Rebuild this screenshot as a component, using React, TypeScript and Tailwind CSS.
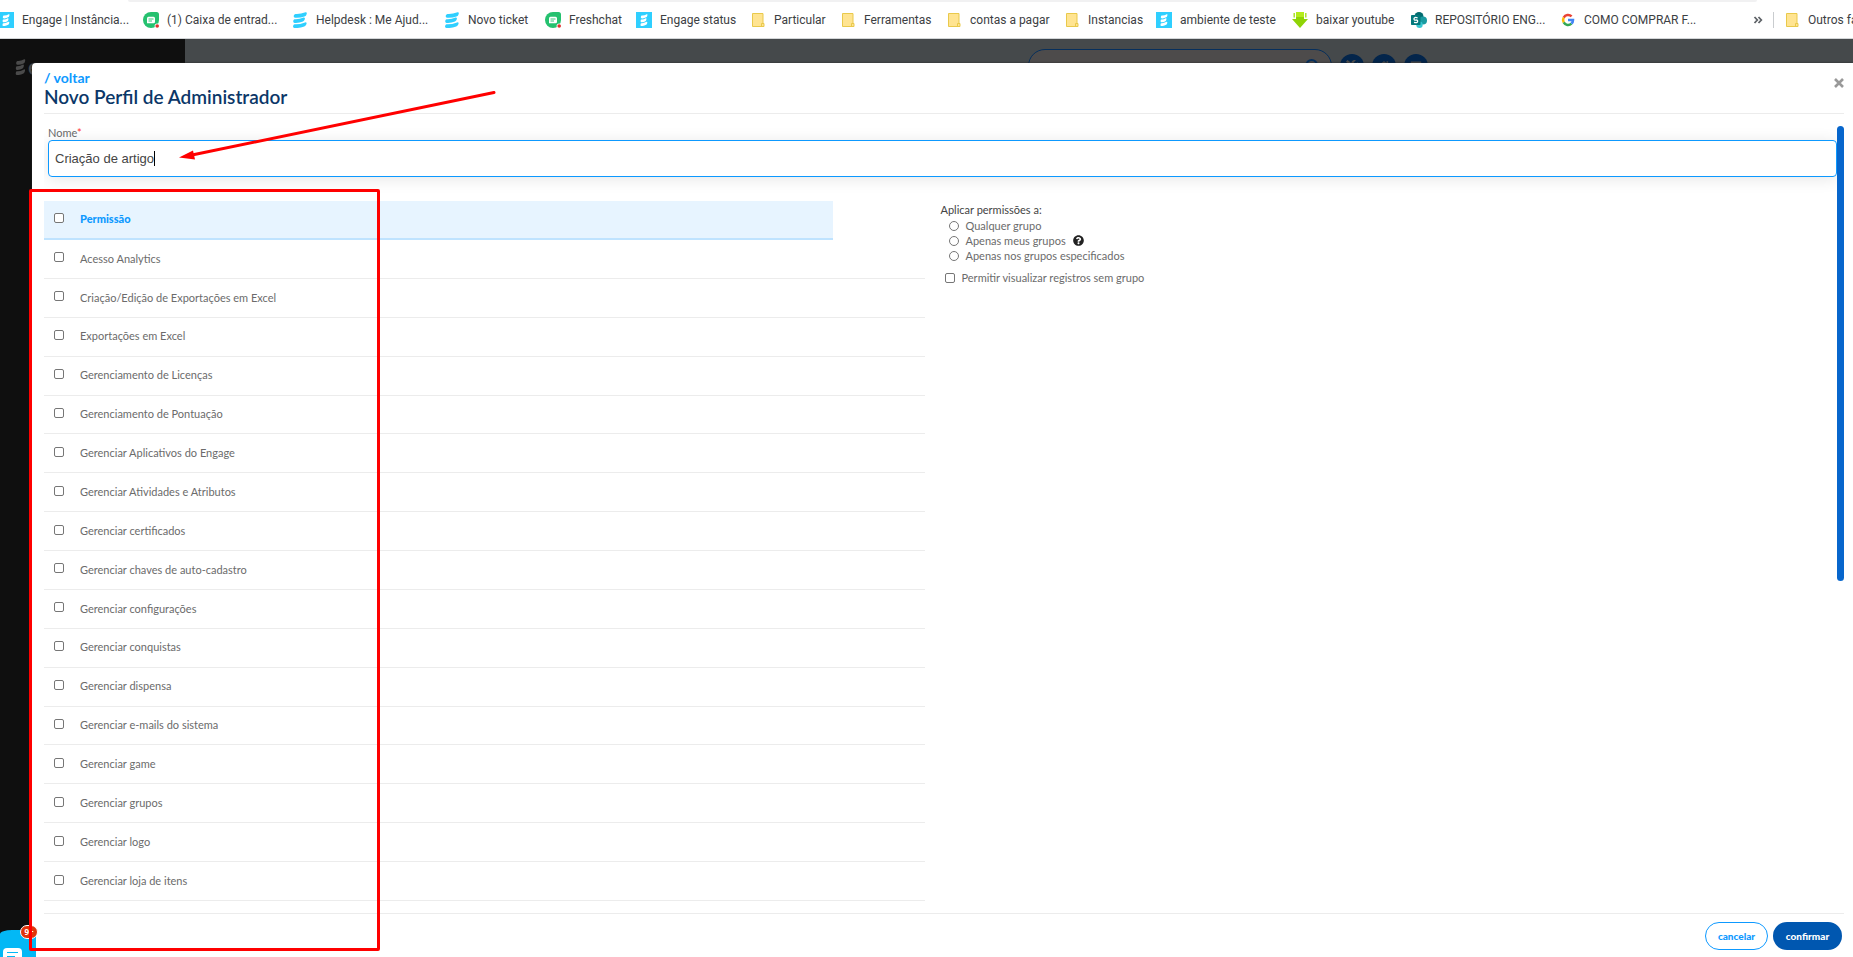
import { useState } from "react";
import { FaHome, FaQuestionCircle, FaTools, FaBars } from "react-icons/fa";
import { Search } from "lucide-react";

const bookmarks = [
  { label: "Engage | Instância...", icon: "engage", width: "w-[145px]" },
  { label: "(1) Caixa de entrad...", icon: "chat", width: "w-[149px]" },
  { label: "Helpdesk : Me Ajud...", icon: "stripes", width: "w-[152px]" },
  { label: "Novo ticket", icon: "stripes", width: "w-[101px]" },
  { label: "Freshchat", icon: "chat", width: "w-[91px]" },
  { label: "Engage status", icon: "engage", width: "w-[114px]" },
  { label: "Particular", icon: "folder", width: "w-[90px]" },
  { label: "Ferramentas", icon: "folder", width: "w-[106px]" },
  { label: "contas a pagar", icon: "folder", width: "w-[118px]" },
  { label: "Instancias", icon: "folder", width: "w-[92px]" },
  { label: "ambiente de teste", icon: "engage", width: "w-[136px]" },
  { label: "baixar youtube", icon: "download", width: "w-[119px]" },
  { label: "REPOSITÓRIO ENG...", icon: "sharepoint", width: "w-[149px]" },
  { label: "COMO COMPRAR F...", icon: "google", width: "w-[149px]" },
];

const permissions = [
  "Acesso Analytics",
  "Criação/Edição de Exportações em Excel",
  "Exportações em Excel",
  "Gerenciamento de Licenças",
  "Gerenciamento de Pontuação",
  "Gerenciar Aplicativos do Engage",
  "Gerenciar Atividades e Atributos",
  "Gerenciar certificados",
  "Gerenciar chaves de auto-cadastro",
  "Gerenciar configurações",
  "Gerenciar conquistas",
  "Gerenciar dispensa",
  "Gerenciar e-mails do sistema",
  "Gerenciar game",
  "Gerenciar grupos",
  "Gerenciar logo",
  "Gerenciar loja de itens",
];

const checkbox =
  "block size-[10px] shrink-0 appearance-none rounded-xs border border-[#767676] bg-white checked:bg-[#0d99ff]";
const radio =
  "block size-[10px] shrink-0 appearance-none rounded-full border border-[#767676] bg-white checked:bg-[#0d99ff]";

function Stripes({ className }: { className: string }) {
  return (
    <svg viewBox="0 0 16 16" preserveAspectRatio="none" className={className} fill="currentColor">
      <path d="M3.500 1.900Q8 2.300 13.500 .200Q15.200 -.100 14.700 1.900Q14.200 3.900 12.500 4.400Q8 6.200 3 5.800Q1.300 5.500 1.800 3.500Q2.300 1.900 3.500 1.900Z" />
      <path d="M2.500 7.200Q7 7.600 11.500 5.600Q13.300 5.200 12.900 7.100Q12.400 9 11 9.600Q7 11.200 2.500 10.900Q.900 10.600 1.200 8.900Q1.600 7.200 2.500 7.200Z" />
      <path d="M2.500 12.200Q7 12.600 13 10.400Q15 10 14.500 11.900Q13.900 13.800 12.300 14.400Q7 16.400 2.300 16Q.700 15.700 1.100 13.900Q1.500 12.200 2.500 12.200Z" />
    </svg>
  );
}

function BookmarkIcon({ icon }: { icon: string }) {
  if (icon === "engage") {
    return (
      <span className="flex size-4 shrink-0 items-center justify-center bg-[#2fcfff] text-white">
        <Stripes className="h-3 w-2" />
      </span>
    );
  }
  if (icon === "stripes") {
    return <Stripes className="size-4 shrink-0 text-[#2fcfff]" />;
  }
  if (icon === "chat") {
    return (
      <svg viewBox="0 0 16 16" className="size-4 shrink-0">
        <path d="M8 0h5.500Q16 0 16 2.500V8A8 8 0 1 1 8 0Z" fill="#25c16f" />
        <path d="M5.500 4.800h5Q12 4.800 12 6.300v3.400q0 1.500-1.500 1.500H4V6.300q0-1.500 1.500-1.500Z" fill="#fff" />
        <path d="M5.500 7h5M5.500 9h3.500" stroke="#25c16f" strokeWidth="0.900" />
        <circle cx="14.200" cy="14" r="2.600" fill="#fff" />
        <circle cx="14.200" cy="14" r="1.800" fill="#e0312e" />
      </svg>
    );
  }
  if (icon === "download") {
    return (
      <svg viewBox="0 0 16 16" className="size-4 shrink-0">
        <path d="M4 0h8v7h4l-8 9L0 7h4Z" fill="#8fd406" />
        <path d="M4 0h8v5H4Z" fill="#b4ec1c" />
        <path d="M2.200 1v4.500M13.800 1v4.500" stroke="#a5de1c" strokeWidth="1.400" />
      </svg>
    );
  }
  if (icon === "sharepoint") {
    return (
      <svg viewBox="0 0 16 16" className="size-4 shrink-0">
        <circle cx="8" cy="4.500" r="4.500" fill="#036c70" />
        <circle cx="12" cy="8.500" r="4" fill="#1a9ba1" />
        <circle cx="8.500" cy="12.700" r="3.200" fill="#37c6d0" />
        <rect x="0" y="3" width="9.500" height="10" rx="0.800" fill="#03787c" />
        <path d="M6.600 5.800Q3 4.800 3 6.700T4.900 8.100T6.600 9.700Q6.300 11.100 3 10.300" fill="none" stroke="#fff" strokeWidth="1.300" />
      </svg>
    );
  }
  if (icon === "google") {
    return (
      <svg viewBox="-4 -4 56 56" className="size-4 shrink-0" fill="none" strokeWidth="9">
        <path d="M9 15.500A17.500 17.500 0 0 1 36.500 11.500" stroke="#ea4335" />
        <path d="M9 32.500A17.500 17.500 0 0 1 9 15.500" stroke="#fbbc05" />
        <path d="M36 36.800A17.500 17.500 0 0 1 9 32.500" stroke="#34a853" />
        <path d="M24 24H41.500A17.500 17.500 0 0 1 36 36.800" stroke="#4285f4" />
      </svg>
    );
  }
  return (
    <svg viewBox="0 0 16 16" className="size-4 shrink-0">
      <path d="M2.500 1.500h10.500v10h1v3H2.500Z" fill="#ffe491" stroke="#e9c94b" />
      <path d="M11.500 14.500v-3h1.500" fill="none" stroke="#e9c94b" />
    </svg>
  );
}

function BookmarksBar() {
  return (
    <nav className="flex h-[39px] shrink-0 flex-col overflow-hidden border-b border-[#d3d6d8] bg-white font-['Roboto',sans-serif] text-xs text-[#3c4043]">
      <div className="mr-24 ml-32 h-[2px] shrink-0 rounded-b bg-[#f1f1f2]" />
      <div className="-ml-[2px] flex flex-1 items-center whitespace-nowrap">
        {bookmarks.map((b) => (
          <a key={b.label} href="#" className={`${b.width} flex shrink-0 items-center gap-2`}>
            <BookmarkIcon icon={b.icon} />
            {b.label}
          </a>
        ))}
        <button type="button" aria-label="Mais favoritos" className="ml-auto shrink-0">
          <svg viewBox="0 0 10 8" className="h-2 w-[10px]" fill="none" stroke="#5f6368" strokeWidth="1.800">
            <path d="M1.500 1 4.300 4 1.500 7M5.500 1 8.300 4 5.500 7" />
          </svg>
        </button>
        <div className="mx-[10px] h-4 w-px shrink-0 bg-[#c9cccf]" />
        <a href="#" className="flex w-[69px] shrink-0 items-center gap-2">
          <BookmarkIcon icon="folder" />
          Outros favoritos
        </a>
      </div>
    </nav>
  );
}

function AppBackground() {
  return (
    <div className="flex h-full bg-[#45494b]">
      <aside className="w-[185px] shrink-0 bg-[#0f0f0f] pt-5 pl-[15px]">
        <div className="flex items-center gap-[2px] text-[#4a4a4a]">
          <Stripes className="h-4 w-[11px]" />
          <span className="font-['Lato',sans-serif] text-[22px] leading-4 font-bold">engage</span>
        </div>
      </aside>
      <div className="flex h-[54px] flex-1 items-center justify-end gap-2 pr-[425px]">
        <div className="flex h-[34px] w-[304px] items-center justify-end rounded-full border border-[#062f5c] bg-[#4d4b4b] pr-3">
          <Search className="size-4 -scale-x-100 text-[#062f5c]" strokeWidth={3} />
        </div>
        <div className="flex size-6 items-center justify-center rounded-full bg-[#03254b] text-[#4d4d4d]">
          <FaTools className="size-3" />
        </div>
        <div className="flex size-6 items-center justify-center rounded-full bg-[#03254b] text-[#4d4d4d]">
          <FaHome className="size-3" />
        </div>
        <div className="flex size-6 items-center justify-center rounded-full bg-[#03254b] text-[#4d4d4d]">
          <FaBars className="size-3" />
        </div>
      </div>
    </div>
  );
}

function PermissionsTable() {
  return (
    <table className="h-[700px] w-full border-separate border-spacing-0 text-left text-[11px] text-[#6b6b6b]">
      <thead>
        <tr className="h-[39px]">
          <th className="w-9 border-b-2 border-[#bfe3ff] bg-[#e7f4ff] pb-[3px] pl-[10px]">
            <input type="checkbox" aria-label="Selecionar todas" className={checkbox} />
          </th>
          <th className="border-b-2 border-[#bfe3ff] bg-[#e7f4ff] font-black text-[#0d99ff]">Permissão</th>
          <td className="w-[92px]" />
        </tr>
      </thead>
      <tbody>
        {permissions.map((name, i) => (
          <tr key={name}>
            <td className="border-b border-[#ececec] pb-[3px] pl-[10px]">
              <input type="checkbox" id={`permission-${i}`} className={checkbox} />
            </td>
            <td colSpan={2} className="border-b border-[#ececec]">
              <label htmlFor={`permission-${i}`}>{name}</label>
            </td>
          </tr>
        ))}
      </tbody>
    </table>
  );
}

function GroupOptions() {
  return (
    <fieldset className="pt-px text-[11px] leading-[15px] text-[#6b6b6b]">
      <legend className="pt-px text-[#444]">Aplicar permissões a:</legend>
      <label className="flex items-center gap-[7px] pl-2">
        <input type="radio" name="scope" className={radio} />
        Qualquer grupo
      </label>
      <label className="flex items-center gap-[7px] pl-2">
        <input type="radio" name="scope" className={radio} />
        Apenas meus grupos
        <FaQuestionCircle className="size-[11px] text-[#222]" />
      </label>
      <label className="flex items-center gap-[7px] pl-2">
        <input type="radio" name="scope" className={radio} />
        Apenas nos grupos especificados
      </label>
      <label className="mt-[7px] flex items-center gap-[7px] pl-1">
        <input type="checkbox" className={checkbox} />
        Permitir visualizar registros sem grupo
      </label>
    </fieldset>
  );
}

function ProfileModal() {
  const [name, setName] = useState("Criação de artigo");

  return (
    <div
      role="dialog"
      className="absolute top-6 right-0 bottom-0 left-8 flex flex-col rounded-tl bg-white pr-[9px] pl-3 font-['Lato',sans-serif] shadow-[0_0_2px_#222]"
    >
      <header className="flex h-[51px] shrink-0 items-start justify-between border-b border-[#ececec] pt-[7px]">
        <div>
          <a href="#" className="block text-sm leading-4 font-bold text-[#0d99ff]">
            / voltar
          </a>
          <h1 className="text-[19px] leading-[22px] font-semibold text-[#0b3768]">Novo Perfil de Administrador</h1>
        </div>
        <button type="button" aria-label="Fechar" className="mt-2">
          <svg viewBox="0 0 10 10" className="size-[10px]" stroke="#999" strokeWidth="2.600">
            <path d="M1 1 9 9M9 1 1 9" />
          </svg>
        </button>
      </header>

      <div className="flex min-h-0 flex-1">
        <div className="min-w-0 flex-1 overflow-hidden pt-[11px]">
          <div className="pl-1">
            <label htmlFor="name" className="block text-[11px] leading-[15px] text-[#6b6b6b]">
              Nome<span className="text-[#f33]">*</span>
            </label>
            <div className="relative">
              <input
                id="name"
                value={name}
                onChange={(e) => setName(e.target.value)}
                className="block h-[37px] w-full rounded border border-[#0d99ff] px-[6px] font-['Liberation_Sans',sans-serif] text-[13px] text-[#444] shadow-[0_2px_16px_rgba(0,0,0,0.1)] outline-none"
              />
              <span className="absolute top-[11px] left-[106px] h-[15px] w-px bg-black" />
            </div>
          </div>
          <div className="mt-6 grid grid-cols-2">
            <div className="pr-4">
              <PermissionsTable />
            </div>
            <GroupOptions />
          </div>
        </div>
        <div className="mt-3 h-[455px] w-[7px] shrink-0 rounded-full bg-[#0766cc]" />
      </div>

      <footer className="flex h-11 shrink-0 justify-end gap-[5px] border-t border-[#ececec] pt-2 pr-[2px] text-[10px] font-black">
        <button type="button" className="h-7 w-[63px] rounded-full border border-[#0d99ff] text-[#0d99ff]">
          cancelar
        </button>
        <button type="button" className="h-7 w-[69px] rounded-full bg-[#0057b0] text-white">
          confirmar
        </button>
      </footer>
    </div>
  );
}

function ChatWidget() {
  return (
    <div className="absolute bottom-0 left-0">
      <button
        type="button"
        aria-label="Chat"
        className="block h-[27px] w-9 overflow-hidden rounded-tl-[12px_4px] bg-[#03b8f5] pt-[18px] pl-[3px]"
      >
        <svg viewBox="0 0 19 9" className="h-[9px] w-[19px]">
          <rect width="19" height="16" rx="4" fill="#fff" />
          <path d="M4 4.500h11M4 8.500h8" stroke="#03b8f5" />
        </svg>
      </button>
      <span className="absolute -top-[5px] left-5 flex h-[14px] w-[18px] items-center justify-center rounded-full border border-white bg-[#e0350b] font-['Open_Sans',sans-serif] text-[8px] font-bold text-white">
        9+
      </span>
    </div>
  );
}

export default function App() {
  return (
    <div className="relative flex h-screen flex-col overflow-hidden bg-white">
      <BookmarksBar />
      <main className="relative min-h-0 flex-1">
        <AppBackground />
        <ProfileModal />
        <ChatWidget />
      </main>

      {/* Tutorial annotations */}
      <div className="pointer-events-none absolute top-[189px] left-[29px] h-[762px] w-[351px] rounded-xs border-3 border-[#ff0000]" />
      <svg
        viewBox="0 0 330 80"
        className="pointer-events-none absolute top-[86px] left-[170px] h-20 w-[330px]"
        fill="#ff0000"
      >
        <path d="M324 6.500 22 69" stroke="#ff0000" strokeWidth="3" strokeLinecap="round" />
        <path d="M9 71.500 23 64.500 25 73.500Z" />
      </svg>
    </div>
  );
}
